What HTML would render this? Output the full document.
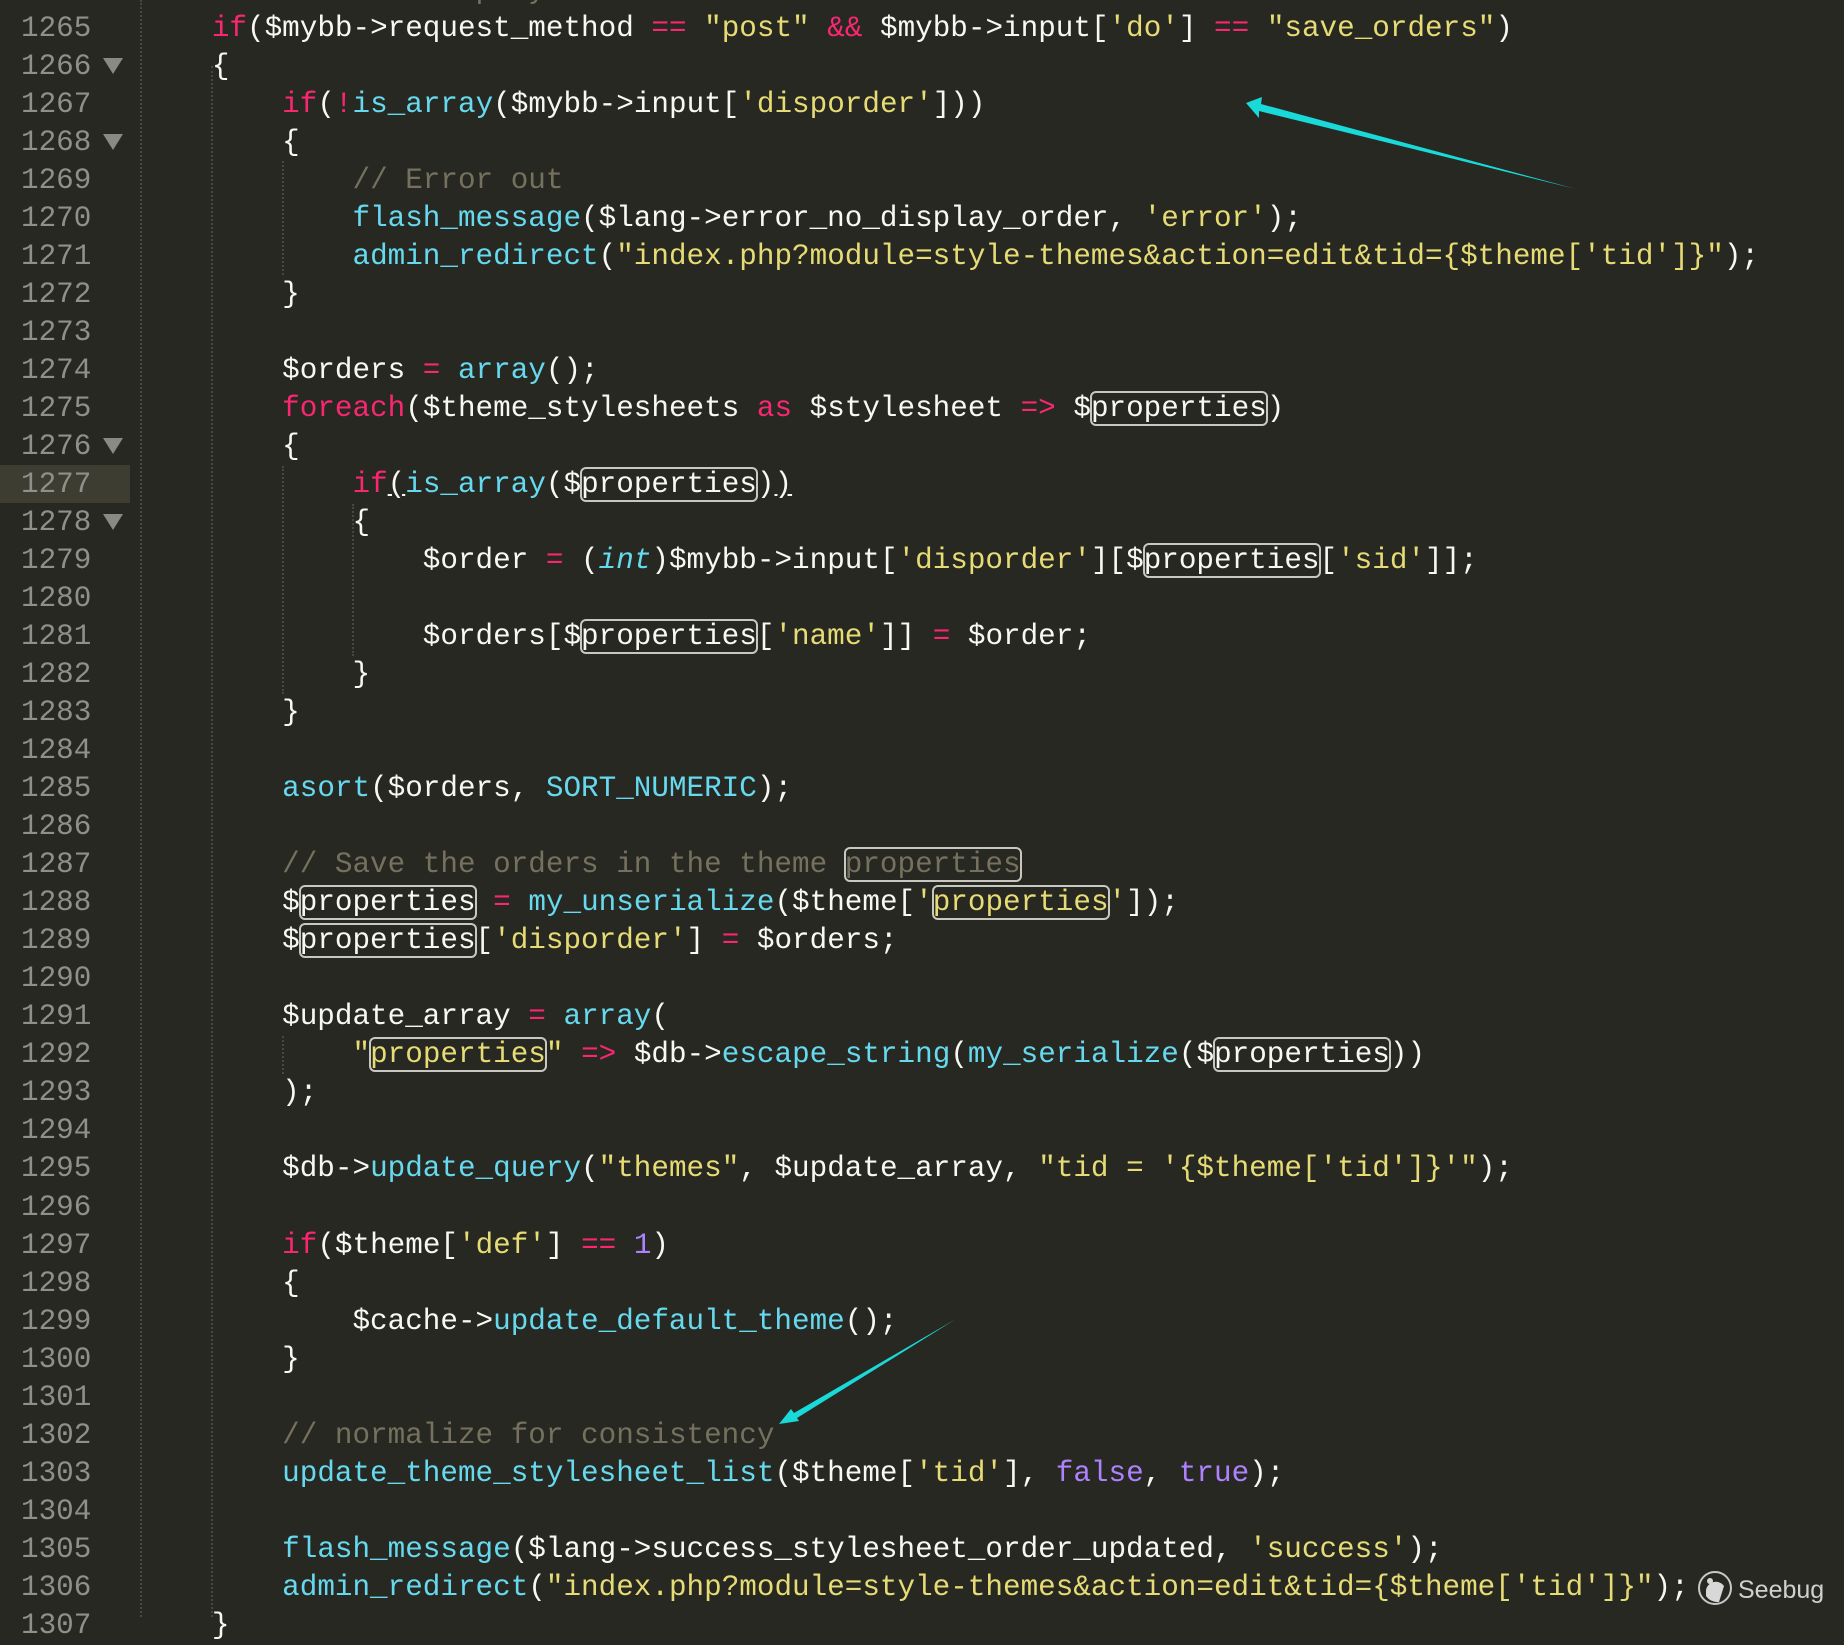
<!DOCTYPE html>
<html><head><meta charset="utf-8"><style>
html,body{margin:0;padding:0}
body{width:1844px;height:1617px;background:#272822;position:relative;overflow:hidden;font-family:"Liberation Mono","DejaVu Sans Mono",monospace;}
#code{position:absolute;left:141.5px;top:-28px;font-size:29.3px;color:#f8f8f2;white-space:normal}
#code div,#nums div{height:38.03px;line-height:38.03px;white-space:pre}
#nums{position:absolute;left:21px;top:-28px;font-size:29.3px;color:#90908a;white-space:normal}
.k{color:#f92672}.f{color:#66d9ef}.s{color:#e6db74}.c{color:#75715e}.p{color:#ae81ff}.i{color:#66d9ef;font-style:italic}
.b{outline:2px solid #c8c8c0;border-radius:5px;outline-offset:-1px}
.u{text-decoration:underline}
.g{position:absolute;width:0;border-left:2px dotted #48483e}
.tri{display:inline-block;vertical-align:middle;margin-left:12px;width:0;height:0;border-left:10px solid transparent;border-right:10px solid transparent;border-top:16px solid #8a8a84}
</style></head><body>
<div style="position:absolute;left:0;top:465px;width:130px;height:38px;background:#3e3d32"></div>
<div class="g" style="left:140px;top:0;height:1617px"></div>
<div class="g" style="left:211px;top:66px;height:1551px"></div>
<div class="g" style="left:282px;top:161px;height:114px"></div>
<div class="g" style="left:282px;top:466px;height:228px"></div>
<div class="g" style="left:282px;top:1036px;height:38px"></div>
<div class="g" style="left:352px;top:504px;height:152px"></div>
<div id="nums"><div>1264</div><div>1265</div><div>1266<span class="tri"></span></div><div>1267</div><div>1268<span class="tri"></span></div><div>1269</div><div>1270</div><div>1271</div><div>1272</div><div>1273</div><div>1274</div><div>1275</div><div>1276<span class="tri"></span></div><div>1277</div><div>1278<span class="tri"></span></div><div>1279</div><div>1280</div><div>1281</div><div>1282</div><div>1283</div><div>1284</div><div>1285</div><div>1286</div><div>1287</div><div>1288</div><div>1289</div><div>1290</div><div>1291</div><div>1292</div><div>1293</div><div>1294</div><div>1295</div><div>1296</div><div>1297</div><div>1298</div><div>1299</div><div>1300</div><div>1301</div><div>1302</div><div>1303</div><div>1304</div><div>1305</div><div>1306</div><div>1307</div></div>
<div id="code">
<div>    <span class="c">// Save the display order</span></div>
<div>    <span class="k">if</span>($mybb-&gt;request_method <span class="k">==</span> <span class="s">"post"</span> <span class="k">&amp;&amp;</span> $mybb-&gt;input[<span class="s">'do'</span>] <span class="k">==</span> <span class="s">"save_orders"</span>)</div>
<div>    {</div>
<div>        <span class="k">if</span>(<span class="k">!</span><span class="f">is_array</span>($mybb-&gt;input[<span class="s">'disporder'</span>]))</div>
<div>        {</div>
<div>            <span class="c">// Error out</span></div>
<div>            <span class="f">flash_message</span>($lang-&gt;error_no_display_order, <span class="s">'error'</span>);</div>
<div>            <span class="f">admin_redirect</span>(<span class="s">"index.php?module=style-themes&amp;action=edit&amp;tid={$theme['tid']}"</span>);</div>
<div>        }</div>
<div> </div>
<div>        $orders <span class="k">=</span> <span class="f">array</span>();</div>
<div>        <span class="k">foreach</span>($theme_stylesheets <span class="k">as</span> $stylesheet <span class="k">=&gt;</span> $<span class="b">properties</span>)</div>
<div>        {</div>
<div>            <span class="k">if</span><span class="u">(</span><span class="f">is_array</span>($<span class="b">properties</span>)<span class="u">)</span></div>
<div>            {</div>
<div>                $order <span class="k">=</span> (<span class="i">int</span>)$mybb-&gt;input[<span class="s">'disporder'</span>][$<span class="b">properties</span>[<span class="s">'sid'</span>]];</div>
<div> </div>
<div>                $orders[$<span class="b">properties</span>[<span class="s">'name'</span>]] <span class="k">=</span> $order;</div>
<div>            }</div>
<div>        }</div>
<div> </div>
<div>        <span class="f">asort</span>($orders, <span class="f">SORT_NUMERIC</span>);</div>
<div> </div>
<div>        <span class="c">// Save the orders in the theme <span class="b">properties</span></span></div>
<div>        $<span class="b">properties</span> <span class="k">=</span> <span class="f">my_unserialize</span>($theme[<span class="s">'<span class="b">properties</span>'</span>]);</div>
<div>        $<span class="b">properties</span>[<span class="s">'disporder'</span>] <span class="k">=</span> $orders;</div>
<div> </div>
<div>        $update_array <span class="k">=</span> <span class="f">array</span>(</div>
<div>            <span class="s">"<span class="b">properties</span>"</span> <span class="k">=&gt;</span> $db-&gt;<span class="f">escape_string</span>(<span class="f">my_serialize</span>($<span class="b">properties</span>))</div>
<div>        );</div>
<div> </div>
<div>        $db-&gt;<span class="f">update_query</span>(<span class="s">"themes"</span>, $update_array, <span class="s">"tid = '{$theme['tid']}'"</span>);</div>
<div> </div>
<div>        <span class="k">if</span>($theme[<span class="s">'def'</span>] <span class="k">==</span> <span class="p">1</span>)</div>
<div>        {</div>
<div>            $cache-&gt;<span class="f">update_default_theme</span>();</div>
<div>        }</div>
<div> </div>
<div>        <span class="c">// normalize for consistency</span></div>
<div>        <span class="f">update_theme_stylesheet_list</span>($theme[<span class="s">'tid'</span>], <span class="p">false</span>, <span class="p">true</span>);</div>
<div> </div>
<div>        <span class="f">flash_message</span>($lang-&gt;success_stylesheet_order_updated, <span class="s">'success'</span>);</div>
<div>        <span class="f">admin_redirect</span>(<span class="s">"index.php?module=style-themes&amp;action=edit&amp;tid={$theme['tid']}"</span>);</div>
<div>    }</div>
</div>
<svg width="1844" height="1617" style="position:absolute;left:0;top:0">
<polygon points="1246,103 1262,97 1261,104 1576,189 1259,111 1259,118" fill="#1ad9d9"/>
<polygon points="779,1424 791,1409 794,1413 956,1319 797,1418 799,1421" fill="#1ad9d9"/>
<g transform="translate(1715,1588)">
<circle cx="0" cy="0" r="16" fill="none" stroke="#c8c8c8" stroke-width="2"/>
<path d="M-9,2 A10,10 0 0 1 9,-2 L4,14 A14,14 0 0 1 -9,8 Z" fill="#d8d8d8"/>
<circle cx="-5" cy="-7" r="3" fill="#d8d8d8"/>
</g>
<text x="1738" y="1598" font-family="Liberation Sans, sans-serif" font-size="25" fill="#d0d0d0">Seebug</text>
</svg>
</body></html>
